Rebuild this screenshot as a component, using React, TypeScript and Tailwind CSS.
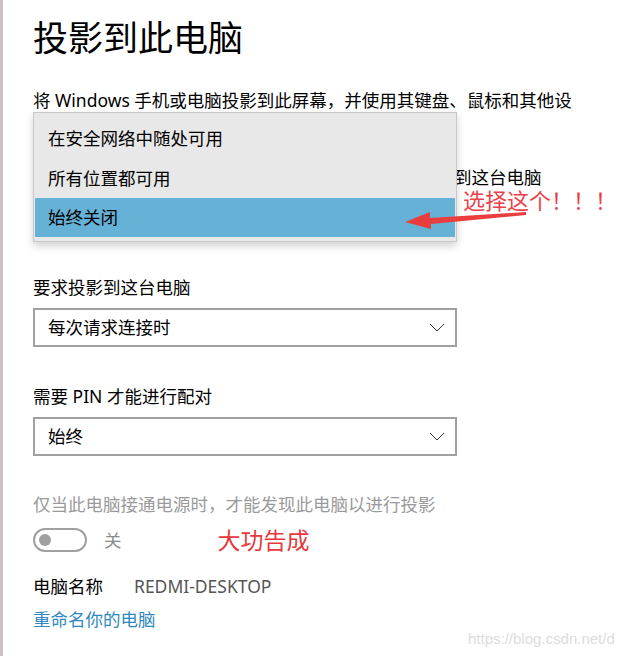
const font = "font-['Noto_Sans','Noto_Sans_CJK_SC',sans-serif]"

function Select({ value }: { value: string }) {
  return (
    <div className="flex h-[39px] w-[424px] items-center justify-between border-2 border-[#a0a0a0] bg-white pl-[13px] pr-[10px] text-[17.5px] text-black">
      <span>{value}</span>
      <svg width="16" height="9" viewBox="0 0 16 9" className="text-[#333]">
        <path d="M1 1 L8 8 L15 1" fill="none" stroke="currentColor" strokeWidth="1" />
      </svg>
    </div>
  )
}

function Arrow() {
  return (
    <svg className="absolute left-[400px] top-[206px]" width="130" height="24" viewBox="0 0 130 24">
      <path d="M126 6 L30 12 L30 6 L5 16 L31 23 L31 18 L126 9 Z" fill="#ea3e3e" />
    </svg>
  )
}

export default function App() {
  return (
    <div className={`relative h-[668px] w-[619px] overflow-hidden bg-white ${font}`}>
      <div className="h-[656px] border-l-[3px] border-[#cbc2c6] pl-[30px]">
        <h1 className="pt-[17px] text-[35px] leading-[42px] text-black">投影到此电脑</h1>
        <p className="mt-[29px] whitespace-nowrap text-[17.5px] leading-[24px] text-black">
          将 Windows 手机或电脑投影到此屏幕，并使用其键盘、鼠标和其他设
        </p>

        <p className="mt-[53px] whitespace-nowrap text-[17.5px] leading-[24px] text-black">
          当你同意时，部分 Windows 和 Android 设备可以投影到这台电脑
        </p>
        <div className="mt-[9px]">
          <Select value="所有位置都可用" />
        </div>

        <p className="mt-[38px] text-[17.5px] leading-[24px] text-black">要求投影到这台电脑</p>
        <div className="mt-[9px]">
          <Select value="每次请求连接时" />
        </div>

        <p className="mt-[37px] text-[17.5px] leading-[24px] text-black">需要 PIN 才能进行配对</p>
        <div className="mt-[9px]">
          <Select value="始终" />
        </div>

        <p className="mt-[36px] text-[17.5px] leading-[24px] text-[#9a9a9a]">仅当此电脑接通电源时，才能发现此电脑以进行投影</p>
        <div className="mt-[12px] flex h-[24px] items-center">
          <div className="flex h-[24px] w-[54px] items-center rounded-full border-2 border-[#a0a0a0] px-[4px]">
            <div className="h-[12px] w-[12px] rounded-full bg-[#a0a0a0]" />
          </div>
          <span className="ml-[17px] text-[17.5px] leading-[24px] text-[#8a8a8a]">关</span>
          <span className="ml-[96px] text-[23px] leading-[24px] text-[#e5383d]">大功告成</span>
        </div>

        <div className="mt-[22px] flex items-center text-[17.5px] leading-[24px]">
          <span className="text-black">电脑名称</span>
          <span className="ml-[31px] text-[#555]">REDMI-DESKTOP</span>
        </div>
        <p className="mt-[9px] text-[17.5px] leading-[24px] text-[#2f88c2]">重命名你的电脑</p>
      </div>

      {/* open dropdown */}
      <div className="absolute left-[33px] top-[112px] w-[424px] border border-[#c8c8c8] bg-[#e8e8e8] px-px pt-[5px] pb-[4px] shadow-[0_4px_8px_rgba(0,0,0,0.18)]">
        <div className="flex h-[40px] items-center pl-[13px] text-[17.5px] text-black">在安全网络中随处可用</div>
        <div className="flex h-[40px] items-center pl-[13px] text-[17.5px] text-black">所有位置都可用</div>
        <div className="flex h-[39px] items-center bg-[#66b1d6] pl-[13px] text-[17.5px] text-black">始终关闭</div>
      </div>

      <span className="absolute left-[463px] top-[186px] text-[22px] leading-[28px] text-[#e8434a]">选择这个！！！</span>
      <Arrow />

      <span className="absolute left-[468px] top-[628px] whitespace-nowrap font-['Liberation_Sans',sans-serif] text-[15px] text-[#dcdcdc]">
        https://blog.csdn.net/d
      </span>
    </div>
  )
}
